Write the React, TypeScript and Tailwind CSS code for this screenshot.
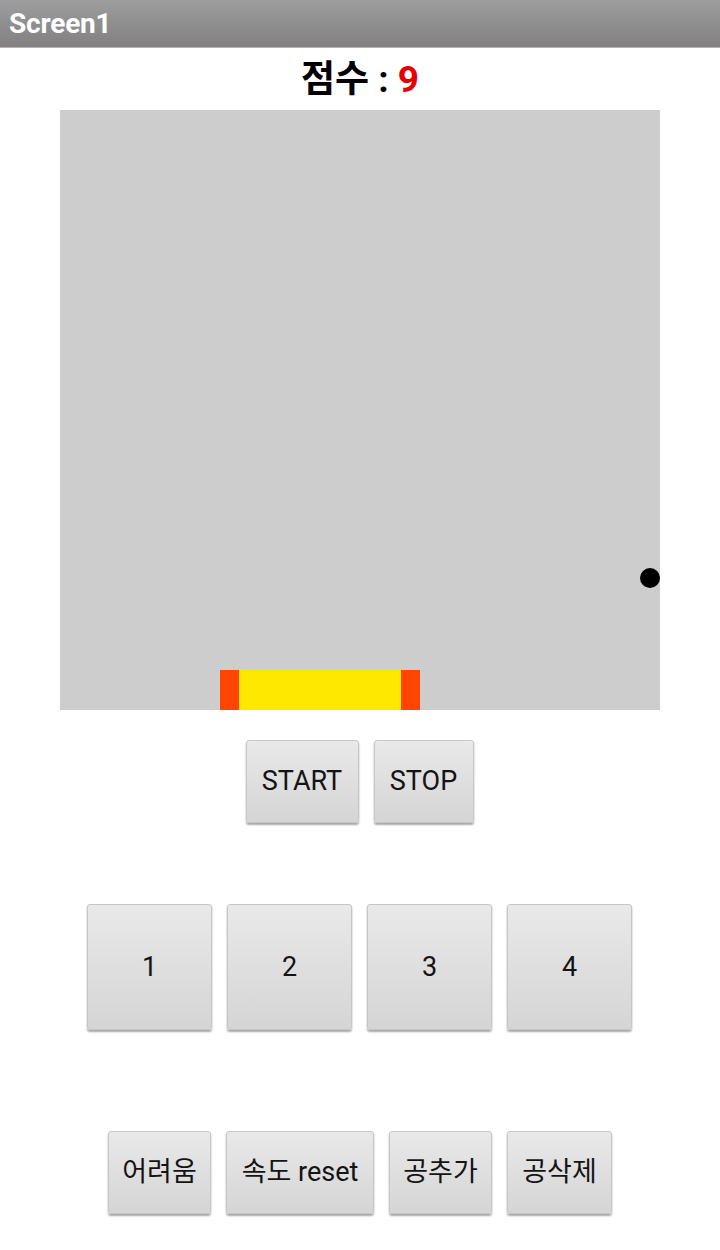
import React from 'react';

const btn =
  'flex items-center justify-center rounded-[3px] border border-[#c6c6c6] bg-gradient-to-b from-[#e9e9e9] to-[#d5d5d5] shadow-[0_2px_2px_rgba(0,0,0,0.35)] text-[#141414] text-[27px] leading-none';

const font = { fontFamily: 'Roboto, "Noto Sans CJK KR", sans-serif' };

export default function App() {
  return (
    <div className="w-[720px] h-[1250px] bg-white flex flex-col" style={font}>
      {/* title bar */}
      <div className="h-[48px] bg-gradient-to-b from-[#9e9e9e] to-[#828080] border-b border-[#b4b4b4] flex items-center px-[9px]">
        <span className="text-white font-bold text-[28px] leading-none tracking-[-0.2px]">Screen1</span>
      </div>

      {/* score */}
      <div className="h-[62px] flex items-center justify-center">
        <span className="font-bold text-[37px] leading-none text-black">
          점수 : <span className="text-[#e60000]">9</span>
        </span>
      </div>

      {/* game canvas */}
      <div className="mx-auto w-[600px] h-[600px] bg-[#cdcdcd] relative">
        <div className="absolute left-[580px] top-[458px] w-[20px] h-[20px] rounded-full bg-black" />
        <div className="absolute left-[160px] top-[560px] w-[200px] h-[40px] flex">
          <div className="w-[19px] bg-[#ff4500]" />
          <div className="flex-1 bg-[#ffe800]" />
          <div className="w-[19px] bg-[#ff4500]" />
        </div>
      </div>

      {/* start / stop */}
      <div className="mt-[30px] flex justify-center gap-[15px] pr-[1px]">
        <button className={`${btn} w-[113px] h-[83px]`}>START</button>
        <button className={`${btn} w-[100px] h-[83px]`}>STOP</button>
      </div>

      {/* number buttons */}
      <div className="mt-[81px] flex justify-center gap-[15px] pr-[1px]">
        {['1', '2', '3', '4'].map((n) => (
          <button key={n} className={`${btn} w-[125px] h-[126px]`}>
            {n}
          </button>
        ))}
      </div>

      {/* options */}
      <div className="mt-[101px] flex justify-center gap-[15px]">
        <button className={`${btn} w-[103px] h-[83px]`}>어려움</button>
        <button className={`${btn} w-[148px] h-[83px]`}>속도 reset</button>
        <button className={`${btn} w-[103px] h-[83px]`}>공추가</button>
        <button className={`${btn} w-[105px] h-[83px]`}>공삭제</button>
      </div>
    </div>
  );
}
